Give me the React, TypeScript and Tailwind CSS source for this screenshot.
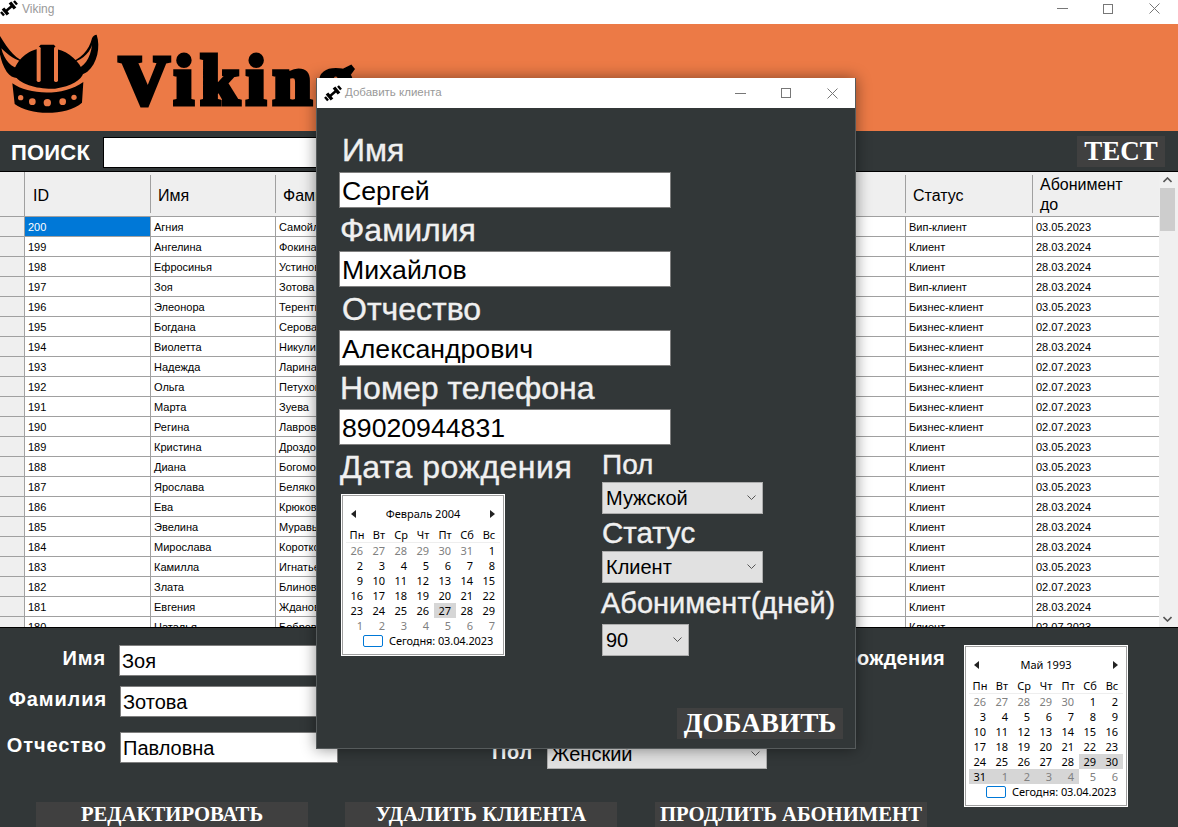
import React from "react";

const rows = [
  ["200", "Агния", "Самойлова", "Вип-клиент", "03.05.2023"],
  ["199", "Ангелина", "Фокина", "Клиент", "28.03.2024"],
  ["198", "Ефросинья", "Устинова", "Клиент", "28.03.2024"],
  ["197", "Зоя", "Зотова", "Вип-клиент", "28.03.2024"],
  ["196", "Элеонора", "Терентьева", "Бизнес-клиент", "03.05.2023"],
  ["195", "Богдана", "Серова", "Бизнес-клиент", "02.07.2023"],
  ["194", "Виолетта", "Никулина", "Бизнес-клиент", "28.03.2024"],
  ["193", "Надежда", "Ларина", "Бизнес-клиент", "02.07.2023"],
  ["192", "Ольга", "Петухова", "Бизнес-клиент", "02.07.2023"],
  ["191", "Марта", "Зуева", "Бизнес-клиент", "02.07.2023"],
  ["190", "Регина", "Лаврова", "Бизнес-клиент", "02.07.2023"],
  ["189", "Кристина", "Дроздова", "Клиент", "03.05.2023"],
  ["188", "Диана", "Богомолова", "Клиент", "03.05.2023"],
  ["187", "Ярослава", "Белякова", "Клиент", "03.05.2023"],
  ["186", "Ева", "Крюкова", "Клиент", "28.03.2024"],
  ["185", "Эвелина", "Муравьева", "Клиент", "28.03.2024"],
  ["184", "Мирослава", "Короткова", "Клиент", "28.03.2024"],
  ["183", "Камилла", "Игнатьева", "Клиент", "03.05.2023"],
  ["182", "Злата", "Блинова", "Клиент", "02.07.2023"],
  ["181", "Евгения", "Жданова", "Клиент", "28.03.2024"],
  ["180", "Наталья", "Боброва", "Клиент", "02.07.2023"],
];

const febDays = [
  "26", "27", "28", "29", "30", "31", "1",
  "2", "3", "4", "5", "6", "7", "8",
  "9", "10", "11", "12", "13", "14", "15",
  "16", "17", "18", "19", "20", "21", "22",
  "23", "24", "25", "26", "27", "28", "29",
  "1", "2", "3", "4", "5", "6", "7",
];

const mayDays = [
  "26", "27", "28", "29", "30", "1", "2",
  "3", "4", "5", "6", "7", "8", "9",
  "10", "11", "12", "13", "14", "15", "16",
  "17", "18", "19", "20", "21", "22", "23",
  "24", "25", "26", "27", "28", "29", "30",
  "31", "1", "2", "3", "4", "5", "6",
];

const weekDays = ["Пн", "Вт", "Ср", "Чт", "Пт", "Сб", "Вс"];

const DumbbellIcon: React.FC = () => (
  <svg width="18" height="17" viewBox="0 0 18 17" className="shrink-0">
    <g stroke="#000" fill="none">
      <line x1="5" y1="12" x2="13" y2="5" strokeWidth="2.4" />
      <line x1="3" y1="8.5" x2="8" y2="14.5" strokeWidth="3.4" />
      <line x1="1" y1="12" x2="4" y2="15.5" strokeWidth="2.4" />
      <line x1="10" y1="2.5" x2="15" y2="8.5" strokeWidth="3.4" />
      <line x1="14" y1="1" x2="17" y2="4.5" strokeWidth="2.4" />
    </g>
  </svg>
);

const WindowButtons: React.FC<{ className: string }> = ({ className }) => (
  <div className={`flex items-center ${className}`}>
    <svg width="11" height="11" viewBox="0 0 11 11" className="mr-[35px]">
      <line x1="0" y1="5.5" x2="11" y2="5.5" stroke="#777" />
    </svg>
    <svg width="10" height="10" viewBox="0 0 10 10" className="mr-[36px]">
      <rect x="0.5" y="0.5" width="9" height="9" fill="none" stroke="#777" />
    </svg>
    <svg width="11" height="11" viewBox="0 0 11 11">
      <path d="M0.5 0.5 L10.5 10.5 M10.5 0.5 L0.5 10.5" stroke="#777" fill="none" />
    </svg>
  </div>
);

const HelmetLogo: React.FC = () => (
  <svg width="110" height="90" viewBox="0 0 330 270" className="shrink-0">
    {/* horns */}
    <path d="M0 18 C-6 50 -2 90 20 125 C35 145 55 150 72 135 L84 100 C50 90 25 60 0 18 Z" fill="#000" />
    <path d="M4 55 C25 75 45 92 80 98 L62 117 C35 115 12 90 4 55 Z" fill="#ec7a46" />
    <path d="M290 14 C302 50 292 100 262 125 C245 138 225 138 212 122 L204 98 C240 92 268 60 276 25 C279 18 284 14 290 14 Z" fill="#000" />
    <path d="M276 45 C268 72 240 95 205 100 L226 116 C250 115 272 85 276 45 Z" fill="#ec7a46" />
    {/* dome */}
    <path d="M40 132 C45 95 80 65 110 58 L122 44 L162 44 L172 58 C205 65 240 95 250 128 C245 150 215 168 165 176 C115 178 60 165 40 132 Z" fill="#000" />
    <rect x="110" y="50" width="12" height="106" rx="5" fill="#ec7a46" />
    <rect x="162" y="50" width="12" height="106" rx="5" fill="#ec7a46" />
    {/* brim */}
    <path d="M37 160 C85 195 190 200 250 156 L246 218 C200 258 90 258 44 222 Z" fill="#000" />
    <circle cx="62" cy="203" r="8" fill="#ec7a46" />
    <circle cx="97" cy="215" r="10" fill="#ec7a46" />
    <circle cx="142" cy="218" r="11" fill="#ec7a46" />
    <circle cx="188" cy="215" r="10" fill="#ec7a46" />
    <circle cx="222" cy="202" r="8" fill="#ec7a46" />
  </svg>
);

const Calendar: React.FC<{
  title: string;
  days: string[];
  grayBefore: number;
  grayAfter: number;
  selected: number[];
}> = ({ title, days, grayBefore, grayAfter, selected }) => (
  <div className="w-[164px] h-[162px] border border-white bg-white shrink-0 font-['Noto_Sans',sans-serif] text-[11px] text-black">
    <div className="h-full border border-[#a0a0a0] px-[3px] pt-[10px]">
      <div className="h-4 flex items-center justify-between px-[5px] leading-4">
        <svg width="6" height="8" viewBox="0 0 6 8">
          <path d="M5 0 L0 4 L5 8 Z" fill="#222" />
        </svg>
        <span>{title}</span>
        <svg width="6" height="8" viewBox="0 0 6 8">
          <path d="M1 0 L6 4 L1 8 Z" fill="#222" />
        </svg>
      </div>
      <div className="grid grid-cols-[repeat(7,22px)] h-[21px] pt-[5px] border-b border-[#eeeeee] leading-[15px] text-center">
        {weekDays.map((d) => (
          <span key={d}>{d}</span>
        ))}
      </div>
      <div className="grid grid-cols-[repeat(7,22px)] auto-rows-[15px]">
        {days.map((d, i) => {
          const gray = i < grayBefore || i >= 42 - grayAfter;
          return (
            <span
              key={i}
              className={`text-right pr-[5px] leading-[15px] ${gray ? "text-[#808080]" : "text-black"} ${
                selected.includes(i) ? "bg-[#d6d6d6]" : ""
              }`}
            >
              {d}
            </span>
          );
        })}
      </div>
      <div className="flex items-center h-[14px] mt-px pl-[17px] text-[11px] leading-[14px]">
        <span className="w-5 h-3 border border-[#0078d7] rounded-[2px] mr-[6px] shrink-0" />
        <span className="whitespace-nowrap tracking-[-0.1px]">Сегодня: 03.04.2023</span>
      </div>
    </div>
  </div>
);

const TextBox: React.FC<{ value: string; className: string }> = ({ value, className }) => (
  <div className={`bg-white border border-[#7f7f7f] text-black flex items-center pl-[2px] pt-px text-[26.67px] ${className}`}>
    {value}
  </div>
);

const SmallBox: React.FC<{ value: string; className: string }> = ({ value, className }) => (
  <div className={`bg-white border border-[#7f7f7f] text-black font-normal tracking-normal flex items-center pl-[2px] text-[20px] ${className}`}>
    {value}
  </div>
);

const ComboBox: React.FC<{ value: string; className: string }> = ({ value, className }) => (
  <div className={`bg-[#e1e1e1] border border-[#adadad] text-black flex items-center justify-between pl-[3px] pr-[6px] text-[20px] ${className}`}>
    <span>{value}</span>
    <svg width="9" height="6" viewBox="0 0 9 6" className="shrink-0">
      <path d="M0.5 0.5 L4.5 4.5 L8.5 0.5" fill="none" stroke="#555" />
    </svg>
  </div>
);

const SerifButton: React.FC<{ label: string; className: string }> = ({ label, className }) => (
  <div className={`bg-[#404040] text-white font-['Liberation_Serif',serif] font-bold flex items-center justify-center whitespace-nowrap ${className}`}>
    {label}
  </div>
);

// the font size comes from className, each label has its own
const Label: React.FC<{ text: string; className: string }> = ({ text, className }) => (
  <div className={`text-[#f0f0f0] whitespace-nowrap flex items-center [-webkit-text-stroke:0.4px_#f0f0f0] ${className}`}>{text}</div>
);

const App: React.FC = () => {
  return (
    <div className="relative w-[1178px] h-[827px] overflow-hidden bg-[#323738] font-['Liberation_Sans',Arial,sans-serif]">
      {/* main window */}
      <div className="h-6 bg-white flex items-center pb-[7px]">
        <DumbbellIcon />
        <span className="ml-1 text-[12px] text-[#999999]">Viking</span>
        <WindowButtons className="ml-auto mr-[18px]" />
      </div>

      <div className="h-[107px] bg-[#ec7a46] flex items-start pt-[6px] overflow-hidden">
        <HelmetLogo />
        <span className="ml-[9px] mt-[13px] font-['Liberation_Serif',serif] font-bold text-black text-[70px] leading-[76px] tracking-[7px] [-webkit-text-stroke:5px_black]">
          Viking
        </span>
      </div>

      <div className="h-[40px] flex items-center pl-[11px] pr-[13px]">
        <span className="text-white font-bold text-[22px] tracking-[0.2px] w-[92px] pt-[2px]">ПОИСК</span>
        <div className="w-[400px] h-[31px] mt-[2px] bg-white border border-black" />
        <SerifButton label="ТЕСТ" className="ml-auto w-[88px] h-[31px] text-[27px]" />
      </div>

      {/* table */}
      <div className="h-[457px] flex border-y border-black overflow-hidden bg-white text-black">
        <div className="w-[1159px] overflow-hidden">
          <div className="flex h-[45px] bg-[#efefef] border-b border-[#a0a0a0] text-[16px] leading-[20px]">
            <div className="w-[25px] border-r border-[#a0a0a0]" />
            <div className="w-[126px] flex items-center pl-2 pt-[4px] border-r border-[#a0a0a0] my-[3px]">ID</div>
            <div className="w-[125px] flex items-center pl-[7px] pt-[4px] border-r border-[#a0a0a0] my-[3px]">Имя</div>
            <div className="flex-1 flex items-center pl-[7px] pt-[4px] border-r border-[#a0a0a0] my-[3px]">Фамилия</div>
            <div className="w-[127px] flex items-center pl-[7px] pt-[4px] border-r border-[#a0a0a0] my-[3px]">Статус</div>
            <div className="w-[126px] flex items-center pl-[7px] pt-[2px] my-[3px]">
              Абонимент
              <br />
              до
            </div>
          </div>
          {rows.map((r, i) => (
            <div key={r[0]} className="flex h-5 border-b border-[#a0a0a0] text-[11px] leading-[21px] whitespace-nowrap">
              <div className="w-[25px] bg-[#efefef] border-r border-[#a0a0a0]" />
              <div className={`w-[126px] border-r border-[#a0a0a0] pl-[3px] ${i === 0 ? "bg-[#0078d7] text-white" : ""}`}>{r[0]}</div>
              <div className="w-[125px] border-r border-[#a0a0a0] pl-[3px]">{r[1]}</div>
              <div className="flex-1 border-r border-[#a0a0a0] pl-[3px]">{r[2]}</div>
              <div className="w-[127px] border-r border-[#a0a0a0] pl-[3px]">{r[3]}</div>
              <div className="w-[126px] pl-[3px]">{r[4]}</div>
            </div>
          ))}
        </div>
        <div className="flex-1 bg-[#f0f0f0] flex flex-col items-start">
          <div className="w-[16px] h-4 flex items-center justify-center">
            <svg width="9" height="6" viewBox="0 0 9 6">
              <path d="M0.5 5 L4.5 1 L8.5 5" fill="none" stroke="#555" strokeWidth="1.6" />
            </svg>
          </div>
          <div className="w-[15px] ml-px h-[43px] bg-[#cdcdcd]" />
          <div className="w-[16px] h-4 mt-auto flex items-center justify-center">
            <svg width="9" height="6" viewBox="0 0 9 6">
              <path d="M0.5 1 L4.5 5 L8.5 1" fill="none" stroke="#555" strokeWidth="1.6" />
            </svg>
          </div>
        </div>
      </div>

      {/* edit panel */}
      <div className="flex h-[199px]">
        <div className="w-[964px] flex flex-col">
          <div className="h-[174px] flex">
            <div className="w-[338px] flex flex-col pt-[17px] text-white font-bold text-[20px] tracking-[0.9px] leading-[26px]">
              <div className="flex h-[31px]">
                <span className="w-[106px] text-right">Имя</span>
                <SmallBox value="Зоя" className="ml-[13px] w-[219px]" />
              </div>
              <div className="flex h-[31px] mt-[10px]">
                <span className="w-[107px] text-right">Фамилия</span>
                <SmallBox value="Зотова" className="ml-[13px] w-[218px]" />
              </div>
              <div className="flex h-[31px] mt-[15px]">
                <span className="w-[107px] text-right">Отчество</span>
                <SmallBox value="Павловна" className="ml-[13px] w-[218px]" />
              </div>
            </div>
            <div className="flex-1 flex flex-col">
              <div className="mt-[17px] text-white font-bold text-[20px] tracking-[0.3px] text-right pr-[19px] leading-[26px]">Дата рождения</div>
              <div className="flex items-start mt-[69px] ml-[154px]">
                <span className="text-white font-bold text-[20px] tracking-[0.7px] w-[55px] leading-[24px]">Пол</span>
                <ComboBox value="Женский" className="w-[220px] h-[29px] pb-[2px]" />
              </div>
            </div>
          </div>
          <div className="h-[25px] flex pl-[36px] gap-[37px] text-[20.7px] leading-[22px]">
            <SerifButton label="РЕДАКТИРОВАТЬ" className="w-[272px] pb-[2px]" />
            <SerifButton label="УДАЛИТЬ КЛИЕНТА" className="w-[272px] pb-[2px]" />
            <SerifButton label="ПРОДЛИТЬ АБОНИМЕНТ" className="w-[272px] ml-px pb-[2px]" />
          </div>
        </div>
        <div className="pt-[17px]">
          <Calendar title="Май 1993" days={mayDays} grayBefore={5} grayAfter={6} selected={[33, 34, 35, 36, 37, 38, 39]} />
        </div>
      </div>

      {/* add client dialog */}
      <div className="absolute left-[316px] top-[78px] w-[540px] h-[671px] bg-[#323738] border-r border-b border-l border-[#565b5c] shadow-[0_0_14px_rgba(0,0,0,0.45)] flex flex-col">
        <div className="h-[30px] bg-white flex items-center pl-[7px] shrink-0">
          <DumbbellIcon />
          <span className="ml-[3px] text-[11.5px] text-[#999999]">Добавить клиента</span>
          <WindowButtons className="ml-auto mr-[17px]" />
        </div>
        <div className="pl-[22px] flex flex-col">
          <Label text="Имя" className="h-[64px] pt-[19px] ml-[3px] text-[32px]" />
          <TextBox value="Сергей" className="w-[332px] h-[36px]" />
          <Label text="Фамилия" className="h-[43px] ml-px text-[32px]" />
          <TextBox value="Михайлов" className="w-[332px] h-[36px]" />
          <Label text="Отчество" className="h-[43px] ml-[3px] text-[32px]" />
          <TextBox value="Александрович" className="w-[332px] h-[36px]" />
          <Label text="Номер телефона" className="h-[43px] ml-px text-[32px]" />
          <TextBox value="89020944831" className="w-[332px] h-[36px]" />
          <div className="flex">
            <div className="w-[263px] shrink-0">
              <Label text="Дата рождения" className="h-[44px] ml-px tracking-[0.5px] text-[32px]" />
              <div className="mt-[5px] ml-[2px]">
                <Calendar title="Февраль 2004" days={febDays} grayBefore={6} grayAfter={7} selected={[32]} />
              </div>
            </div>
            <div className="flex flex-col">
              <Label text="Пол" className="h-[37px] pt-[2px] text-[28px]" />
              <ComboBox value="Мужской" className="w-[161px] h-[32px]" />
              <Label text="Статус" className="h-[37px] pt-[2px] text-[29.5px]" />
              <ComboBox value="Клиент" className="w-[161px] h-[32px]" />
              <Label text="Абонимент(дней)" className="h-[41px] -ml-px text-[29px]" />
              <ComboBox value="90" className="w-[87px] h-[32px]" />
            </div>
          </div>
        </div>
        <SerifButton label="ДОБАВИТЬ" className="absolute left-[360px] top-[630px] w-[166px] h-[31px] text-[27.2px]" />
      </div>
    </div>
  );
};

export default App;
